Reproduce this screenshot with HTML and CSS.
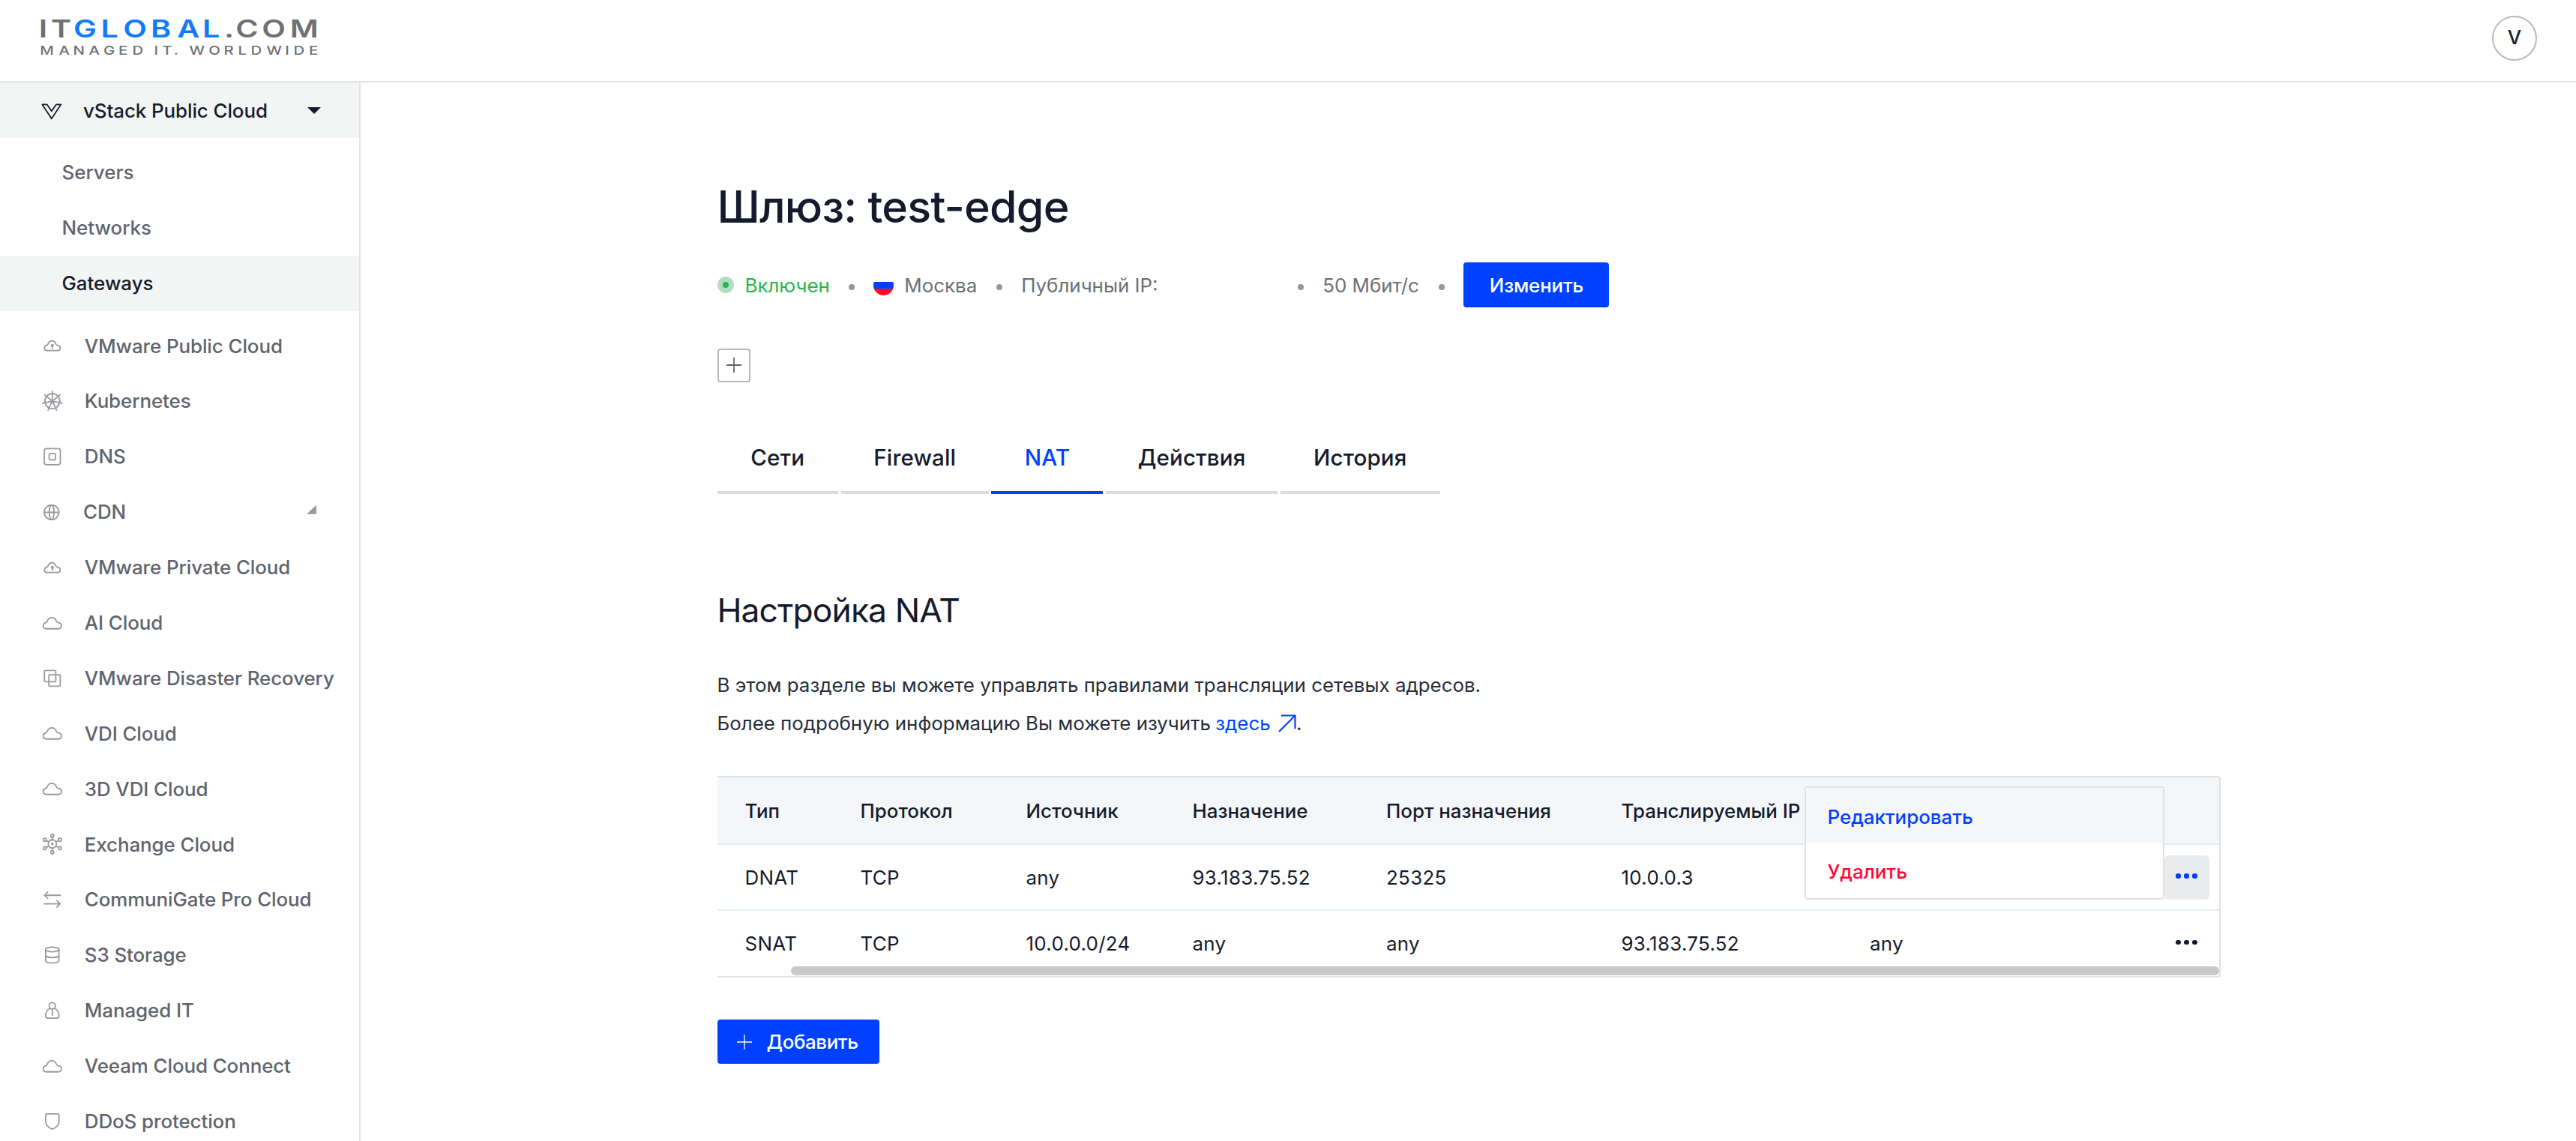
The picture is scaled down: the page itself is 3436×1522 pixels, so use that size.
FILE: index.html
```
<!DOCTYPE html>
<html lang="ru">
<head>
  <meta charset="UTF-8" />
  <meta name="viewport" content="width=device-width, initial-scale=1.0" />
  <title>Шлюз: test-edge</title>
  <link rel="stylesheet" href="styles.css">
</head>
<body>

  <!-- Icon set -->
  <svg class="sprite" xmlns="http://www.w3.org/2000/svg">
    <symbol id="i-vstack" viewBox="0 0 16 16">
      <path d="M1.3 3.5h3.4L8 8.3l3.3-4.8h3.4L8 13.7z" />
    </symbol>
    <symbol id="i-cloud" viewBox="0 0 16 16">
      <path d="M3.7 12.3h8.6c1.3 0 2.3-.8 2.3-2.1s-1-2.2-2.2-2.3c-.9-.1-1.1-.3-1.4-1C10.4 5.4 9.3 4.2 7.7 4.2c-1.7 0-2.9 1-3.4 2.7-.2.6-.5.9-1.1 1C2 8.2 1.4 9 1.4 10.2c0 1.3 1 2.1 2.3 2.1z" />
    </symbol>
    <symbol id="i-cloud-up" viewBox="0 0 16 16">
      <path d="M4.3 11.7h7.4c1.1 0 2-.7 2-1.8s-.9-1.9-1.9-2c-.8-.1-1-.3-1.2-.9-.5-1.3-1.5-2.3-2.8-2.3-1.5 0-2.5.9-2.9 2.3-.2.5-.5.8-1 .9-1 .2-1.6.9-1.6 2 0 1.1.9 1.8 2 1.8z" />
      <path d="M8 10V8" />
      <circle cx="8" cy="8" r=".6" />
    </symbol>
    <symbol id="i-kube" viewBox="0 0 16 16">
      <circle cx="8" cy="8.1" r="5.4" />
      <path d="M8 8.1V.9M8 8.1l5.6-4.5M8 8.1l7 1.6M8 8.1l3.1 6.5M8 8.1l-3.1 6.5M8 8.1l-7 1.6M8 8.1L2.4 3.6" />
    </symbol>
    <symbol id="i-dns" viewBox="0 0 16 16">
      <rect x="2.2" y="2.4" width="11.6" height="11.6" rx="1.7" />
      <rect x="5.7" y="5.9" width="4.6" height="4.6" rx="1.2" />
    </symbol>
    <symbol id="i-globe" viewBox="0 0 16 16">
      <circle cx="8" cy="8.3" r="5.3" />
      <ellipse cx="8" cy="8.3" rx="1.7" ry="5.3" />
      <path d="M2.7 8.3h10.6" />
    </symbol>
    <symbol id="i-copy" viewBox="0 0 16 16">
      <rect x="2.3" y="2.3" width="8.2" height="8.2" rx=".6" />
      <rect x="5.5" y="5.5" width="8.2" height="8.2" rx=".6" />
    </symbol>
    <symbol id="i-nodes" viewBox="0 0 16 16">
      <circle cx="8" cy="8" r="3" />
      <circle cx="8" cy="8" r=".5" />
      <circle cx="8" cy="2" r="1.1" /><circle cx="8" cy="14" r="1.1" />
      <circle cx="2.6" cy="5" r="1.1" /><circle cx="13.4" cy="5" r="1.1" />
      <circle cx="2.6" cy="11" r="1.1" /><circle cx="13.4" cy="11" r="1.1" />
      <path d="M8 3.1V5M8 11v1.9M3.6 5.5l1.8 1M12.4 5.5l-1.8 1M3.6 10.5l1.8-1M12.4 10.5l-1.8-1" />
    </symbol>
    <symbol id="i-swap" viewBox="0 0 16 16">
      <path d="M13.7 5H2.4M4.7 2.7L2.4 5l2.3 2.3M2.3 11.2h11.3M11.3 8.9l2.3 2.3-2.3 2.3" />
    </symbol>
    <symbol id="i-db" viewBox="0 0 16 16">
      <ellipse cx="8" cy="4" rx="4.8" ry="1.7" />
      <path d="M3.2 4v8.2c0 1 2.1 1.6 4.8 1.6s4.8-.6 4.8-1.6V4M3.2 8.2c0 1 2.1 1.7 4.8 1.7s4.8-.7 4.8-1.7" />
    </symbol>
    <symbol id="i-person" viewBox="0 0 16 16">
      <circle cx="8" cy="4.7" r="2.3" />
      <path d="M6.3 6.6c-1.9.8-3.1 2.7-3.1 5.2 0 1.3.5 1.8 1.5 1.8h6.6c1 0 1.5-.5 1.5-1.8 0-2.5-1.2-4.4-3.1-5.2M8 7v4.5" />
    </symbol>
    <symbol id="i-shield" viewBox="0 0 16 16">
      <path d="M3.2 3.5c0-.5.3-.8.8-.8h8c.5 0 .8.3.8.8v4.6c0 2.5-1.7 4.3-4.8 5.5-3.1-1.2-4.8-3-4.8-5.5z" />
    </symbol>
  </svg>

  <header class="header">
    <svg class="logo" viewBox="0 0 400 60">
      <g transform="translate(-40 -10) scale(1.25 1)">
        <text class="logo-name" y="50.5" x="41.5 54.5 78.5 107.7 131.5 160.8 189 216 239.3 251.5 279.5 309.5">IT<tspan class="logo-accent">GLOBAL</tspan>.COM</text>
        <text class="logo-tagline" y="73.2" x="42.7 62.8 78 94.8 110.4 126.4 141.2 155 164.5 173 185.5 194 202 222.7 238.8 254 267.6 284.5 304.2 313.2 329.6">MANAGED IT. WORLDWIDE</text>
      </g>
    </svg>
    <div class="avatar">V</div>
  </header>

  <div class="layout">
    <nav class="sidebar">
      <a class="nav-item nav-root active"><svg class="icon"><use href="#i-vstack" /></svg>vStack Public Cloud<span class="caret-down"></span></a>
      <div class="submenu">
        <a class="sub-item">Servers</a>
        <a class="sub-item">Networks</a>
        <a class="sub-item active">Gateways</a>
      </div>
      <a class="nav-item"><svg class="icon"><use href="#i-cloud-up" /></svg>VMware Public Cloud</a>
      <a class="nav-item"><svg class="icon"><use href="#i-kube" /></svg>Kubernetes</a>
      <a class="nav-item"><svg class="icon"><use href="#i-dns" /></svg>DNS</a>
      <a class="nav-item nav-root"><svg class="icon"><use href="#i-globe" /></svg>CDN<span class="caret-corner"></span></a>
      <a class="nav-item"><svg class="icon"><use href="#i-cloud-up" /></svg>VMware Private Cloud</a>
      <a class="nav-item"><svg class="icon"><use href="#i-cloud" /></svg>AI Cloud</a>
      <a class="nav-item"><svg class="icon"><use href="#i-copy" /></svg>VMware Disaster Recovery</a>
      <a class="nav-item"><svg class="icon"><use href="#i-cloud" /></svg>VDI Cloud</a>
      <a class="nav-item"><svg class="icon"><use href="#i-cloud" /></svg>3D VDI Cloud</a>
      <a class="nav-item"><svg class="icon"><use href="#i-nodes" /></svg>Exchange Cloud</a>
      <a class="nav-item"><svg class="icon"><use href="#i-swap" /></svg>CommuniGate Pro Cloud</a>
      <a class="nav-item"><svg class="icon"><use href="#i-db" /></svg>S3 Storage</a>
      <a class="nav-item"><svg class="icon"><use href="#i-person" /></svg>Managed IT</a>
      <a class="nav-item"><svg class="icon"><use href="#i-cloud" /></svg>Veeam Cloud Connect</a>
      <a class="nav-item"><svg class="icon"><use href="#i-shield" /></svg>DDoS protection</a>
    </nav>

    <main class="content">
      <h1>Шлюз: test-edge</h1>

      <div class="status">
        <span class="status-dot"></span>
        <span class="status-on">Включен</span>
        <span class="bullet"></span>
        <span class="flag"></span>
        <span>Москва</span>
        <span class="bullet"></span>
        <span class="public-ip">Публичный IP:</span>
        <span class="bullet"></span>
        <span>50 Мбит/с</span>
        <span class="bullet"></span>
        <button class="btn btn-edit">Изменить</button>
      </div>

      <button class="tag-add">
        <svg viewBox="0 0 20 20"><path d="M10 0v20M0 10h20" /></svg>
      </button>

      <div class="tabs">
        <a class="tab tab-networks">Сети</a>
        <a class="tab tab-firewall">Firewall</a>
        <a class="tab tab-nat active">NAT</a>
        <a class="tab tab-actions">Действия</a>
        <a class="tab tab-history">История</a>
      </div>

      <h2>Настройка NAT</h2>
      <p class="description">
        В этом разделе вы можете управлять правилами трансляции сетевых адресов.<br>
        Более подробную информацию Вы можете изучить <a class="link">здесь <svg viewBox="0 0 24 24"><path d="M1 23L22 2M4 1.5h18.5V19" /></svg></a>.
      </p>

      <div class="table-wrap">
        <table>
          <colgroup>
            <col class="c-type"><col class="c-proto"><col class="c-src"><col class="c-dst"><col class="c-port"><col class="c-ip"><col>
          </colgroup>
          <thead>
            <tr>
              <th>Тип</th><th>Протокол</th><th>Источник</th><th>Назначение</th><th>Порт назначения</th><th>Транслируемый IP</th><th></th>
            </tr>
          </thead>
          <tbody>
            <tr>
              <td>DNAT</td><td>TCP</td><td>any</td><td>93.183.75.52</td><td>25325</td><td>10.0.0.3</td>
              <td>
                <div class="last-cell">
                  <button class="dots open"><i></i><i></i><i></i></button>
                  <div class="menu">
                    <a class="menu-item edit">Редактировать</a>
                    <a class="menu-item delete">Удалить</a>
                  </div>
                </div>
              </td>
            </tr>
            <tr>
              <td>SNAT</td><td>TCP</td><td>10.0.0.0/24</td><td>any</td><td>any</td><td>93.183.75.52</td>
              <td>
                <div class="last-cell">
                  <span>any</span>
                  <button class="dots"><i></i><i></i><i></i></button>
                </div>
              </td>
            </tr>
          </tbody>
        </table>
        <div class="scrollbar"></div>
      </div>

      <button class="btn btn-add">
        <svg viewBox="0 0 20 20"><path d="M10 0v20M0 10h20" /></svg>
        Добавить
      </button>
    </main>
  </div>

</body>
</html>
```
FILE: styles.css
```
* {
  box-sizing: border-box;
  margin: 0;
  padding: 0;
}

body {
  background: #fff;
  color: #151b2c;
  font-family: Inter, sans-serif;
  font-size: 25.9px;
  height: 100vh;
  overflow: hidden;
}

button {
  font: inherit;
  border: none;
  background: none;
}

.sprite {
  display: none;
}

/* Header */
.header {
  display: flex;
  align-items: center;
  justify-content: space-between;
  height: 110px;
  padding: 0 52px 7px 40px;
  border-bottom: 2px solid #e1e2e4;
}

.logo {
  width: 400px;
  height: 60px;
  margin-top: -21px;
  overflow: visible;
}

.logo text {
  font-family: Inter, sans-serif;
  font-weight: 500;
  fill: #6f7073;
}

.logo .logo-name {
  font-size: 33px;
  font-weight: 600;
}

.logo .logo-accent {
  fill: #147bf8;
}

.logo-tagline {
  font-size: 16.3px;
}

.avatar {
  display: flex;
  align-items: center;
  justify-content: center;
  width: 60px;
  height: 60px;
  border: 2px solid #b9babd;
  border-radius: 50%;
  font-weight: 500;
  padding-bottom: 3px;
}

/* Sidebar */
.layout {
  display: flex;
}

.sidebar {
  width: 481px;
  height: 1412px;
  border-right: 2px solid #e1e2e4;
  overflow: hidden;
  flex-shrink: 0;
}

.nav-item {
  display: flex;
  align-items: center;
  height: 73.9px;
  padding: 1px 0 0 55px;
  color: #5f646d;
  font-weight: 500;
  letter-spacing: -0.08px;
  white-space: nowrap;
}

.nav-item .icon {
  width: 29.6px;
  height: 29.6px;
  margin-right: 28.2px;
  color: #98999d;
}

.nav-root .icon {
  margin-left: -1px;
  margin-right: 27.4px;
}

.icon {
  fill: none;
  stroke: currentColor;
  stroke-width: 0.95;
  stroke-linejoin: round;
  stroke-linecap: round;
}

.nav-item.active,
.sub-item.active {
  background: #f3f5f5;
  color: #151b2c;
}

.nav-item.active .icon {
  color: #151b2c;
}

.caret-down {
  margin-left: auto;
  margin-right: 51px;
  border: 9.5px solid transparent;
  border-top-color: #151b2c;
  border-bottom: 0;
}

.caret-corner {
  width: 13px;
  height: 12px;
  margin: 0 57px 6px auto;
  background: #98999d;
  clip-path: polygon(100% 0, 100% 100%, 0 100%);
}

.submenu {
  padding: 9px 0 9px;
}

.sub-item {
  display: flex;
  align-items: center;
  height: 73.9px;
  padding: 0 0 1px 82.5px;
  color: #5f646d;
  font-weight: 500;
}

/* Content */
.content {
  width: 2480px;
  padding: 128.5px 0 0 475.5px;
}

h1 {
  font-size: 59.2px;
  line-height: 74px;
  font-weight: 500;
  letter-spacing: -0.8px;
}

.status {
  display: flex;
  align-items: center;
  height: 59.2px;
  margin-top: 38px;
  color: #6d7076;
}

.status-dot {
  width: 22px;
  height: 22px;
  border: 7.4px solid #b2dcbf;
  border-radius: 50%;
  background: #24b74b;
}

.status-on {
  margin-left: 15px;
  margin-right: -0.5px;
  color: #24b74b;
}

.bullet {
  width: 8px;
  height: 8px;
  margin: 5px 25px 0 26px;
  border-radius: 50%;
  background: #94969c;
}

.flag {
  width: 27px;
  height: 27px;
  margin-right: 14px;
  border-radius: 50%;
  background: linear-gradient(#fff 33%, #0041ff 33% 66%, #ff0a28 66%);
}

.public-ip {
  width: 343px;
}

.btn {
  display: flex;
  align-items: center;
  height: 59.4px;
  border-radius: 4px;
  background: #0041ff;
  color: #fff;
  font-weight: 500;
}

.btn-edit {
  justify-content: center;
  width: 194px;
  margin-left: 0.5px;
  letter-spacing: -0.2px;
}

.tag-add {
  display: flex;
  align-items: center;
  justify-content: center;
  width: 44.5px;
  height: 44.5px;
  margin-top: 55.5px;
  border: 2px solid #b7b8bb;
  border-radius: 4px;
}

.tag-add svg {
  width: 20px;
  height: 20px;
  flex-shrink: 0;
  stroke: #5f646d;
  stroke-width: 1.8;
}

.tabs {
  display: flex;
  gap: 3.7px;
  margin-top: 55.5px;
}

.tab {
  height: 94px;
  line-height: 90px;
  text-align: center;
  font-size: 29.6px;
  font-weight: 500;
  letter-spacing: 0.1px;
  border-bottom: 4px solid #dcdcde;
}

.tab.active {
  color: #0041ff;
  border-color: #0041ff;
}

.tab-networks {
  width: 161.5px;
}

.tab-firewall {
  width: 197px;
}

.tab-nat {
  width: 149px;
}

.tab-actions {
  width: 229px;
}

.tab-history {
  width: 213px;
}

h2 {
  margin-top: 127px;
  font-size: 44.4px;
  line-height: 56px;
  font-weight: 400;
  letter-spacing: -0.9px;
}

.description {
  margin-top: 47px;
  line-height: 50.6px;
  color: #262c3a;
}

.link {
  color: #0041ff;
  margin-left: -1px;
}

.link svg {
  width: 24px;
  height: 24px;
  margin-left: 3px;
  vertical-align: -3px;
  fill: none;
  stroke: currentColor;
  stroke-width: 2.2;
}

/* NAT rules */
.table-wrap {
  position: relative;
  width: 2005px;
  margin-top: 45px;
  border: 2px solid #e1e2e4;
  border-left: none;
  border-radius: 0 4px 4px 0;
}

table {
  width: 100%;
  table-layout: fixed;
  border-collapse: separate;
  border-spacing: 0;
}

.c-type { width: 154px; }
.c-proto { width: 221px; }
.c-src { width: 222px; }
.c-dst { width: 258.5px; }
.c-port { width: 313.5px; }
.c-ip { width: 331.5px; }

th,
td {
  padding-left: 37px;
  text-align: left;
  white-space: nowrap;
  border-bottom: 2px solid #e5ecf6;
}

th {
  height: 90px;
  background: #f5f6f8;
  font-weight: 500;
}

td {
  height: 88px;
  letter-spacing: 0.3px;
}

tbody tr:last-child td {
  height: 87px;
  border-bottom: none;
}

.last-cell {
  position: relative;
  display: flex;
  align-items: center;
  padding-right: 13px;
}

.dots {
  display: flex;
  align-items: center;
  justify-content: center;
  gap: 4.6px;
  width: 60px;
  height: 59px;
  margin-left: auto;
  border-radius: 6px;
  color: #151b2c;
}

.dots.open {
  background: #e9ebed;
  color: #0041ff;
}

.dots i {
  width: 6.4px;
  height: 6.4px;
  margin-top: -4px;
  border-radius: 50%;
  background: currentColor;
}

.menu {
  position: absolute;
  right: 73px;
  bottom: 0;
  width: 480px;
  border: 2px solid #e1e2e4;
  border-radius: 4px;
  background: #fff;
  font-weight: 500;
  letter-spacing: 0;
  z-index: 1;
}

.menu-item {
  display: block;
  height: 73.5px;
  padding-left: 29px;
  line-height: 77px;
}

.menu-item.edit {
  background: #f5f6f8;
  color: #0041ff;
}

.menu-item.delete {
  color: #ff0a37;
}

.scrollbar {
  position: absolute;
  right: 0;
  bottom: 1px;
  width: 1905px;
  height: 12.4px;
  border-radius: 7px;
  background: #c9c9c9;
}

.btn-add {
  width: 216px;
  margin-top: 55.5px;
  padding-left: 26px;
  letter-spacing: -0.4px;
}

.btn-add svg {
  width: 20px;
  height: 20px;
  margin-right: 20px;
  stroke: #fff;
  stroke-width: 1.3;
}
```
